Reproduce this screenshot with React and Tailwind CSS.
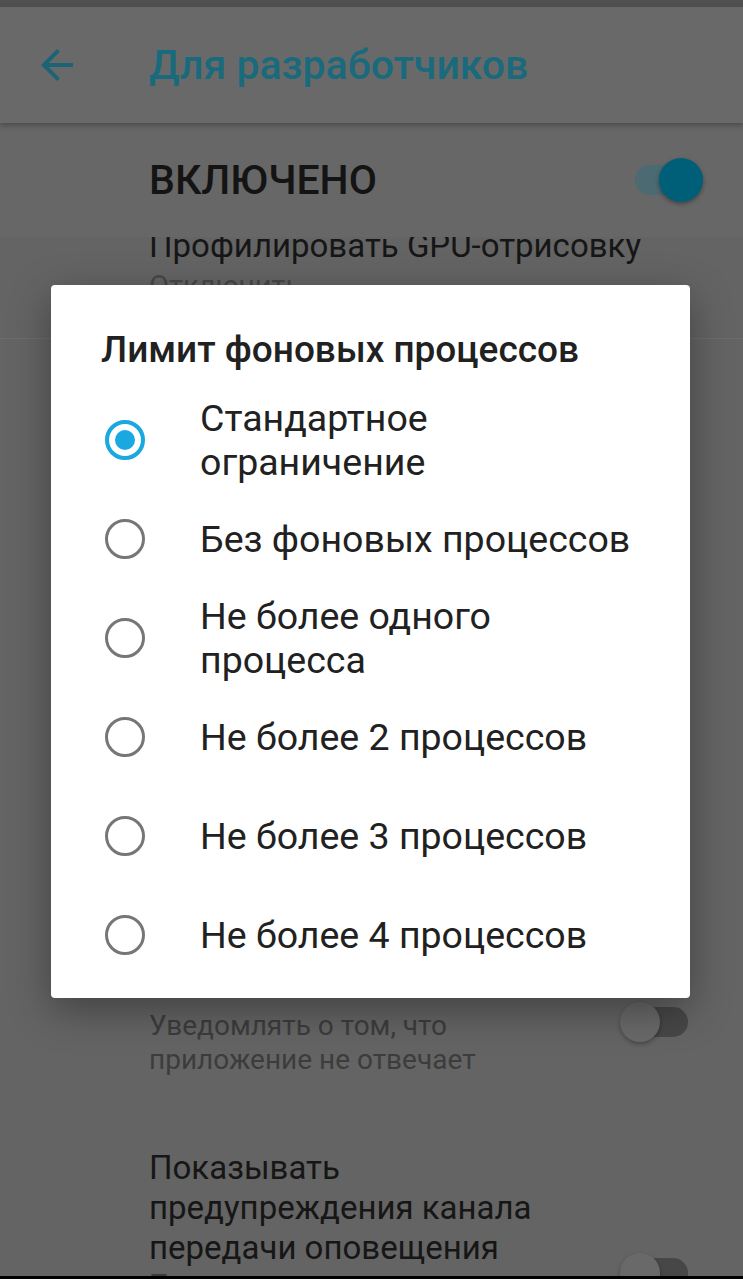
import React from "react";

const options = [
  { label: ["Стандартное", "ограничение"], checked: true },
  { label: ["Без фоновых процессов"] },
  { label: ["Не более одного", "процесса"] },
  { label: ["Не более 2 процессов"] },
  { label: ["Не более 3 процессов"] },
  { label: ["Не более 4 процессов"] },
];

function Radio({ checked }) {
  if (checked) {
    return (
      <div className="flex h-[40px] w-[40px] shrink-0 items-center justify-center rounded-full border-[4px] border-[#19a8df]">
        <div className="h-[20px] w-[20px] rounded-full bg-[#19a8df]" />
      </div>
    );
  }
  return <div className="h-[40px] w-[40px] shrink-0 rounded-full border-[3.5px] border-[#767676]" />;
}

function Toggle({ on }) {
  if (on) {
    return (
      <div className="relative h-[44px] w-[68px] shrink-0">
        <div className="absolute left-0 top-[7px] h-[30px] w-[55px] rounded-full bg-[#4b6a71]" />
        <div className="absolute right-0 top-0 h-[44px] w-[44px] rounded-full bg-[#005f78] shadow-[0_2px_4px_rgba(0,0,0,0.35)]" />
      </div>
    );
  }
  return (
    <div className="relative h-[40px] w-[68px] shrink-0">
      <div className="absolute right-0 top-[5px] h-[30px] w-[50px] rounded-full bg-[#474747]" />
      <div className="absolute left-0 top-0 h-[40px] w-[40px] rounded-full bg-[#696969] shadow-[0_2px_4px_rgba(0,0,0,0.3)]" />
    </div>
  );
}

export default function App() {
  return (
    <div className="relative h-[1279px] w-[743px] overflow-hidden border-b-[3px] border-black bg-[#646464] font-['Roboto',sans-serif]">
      {/* status bar */}
      <div className="h-[7px] bg-[#505050]" />

      {/* toolbar */}
      <header className="relative z-20 flex h-[116px] items-center bg-[#696969] shadow-[0_3px_5px_rgba(0,0,0,0.25)]">
        <svg viewBox="0 0 24 24" className="ml-[33px] h-[48px] w-[48px] fill-[#1b6476]">
          <path d="M20 11H7.83l5.59-5.59L12 4l-8 8 8 8 1.41-1.41L7.83 13H20v-2z" />
        </svg>
        <h1 className="ml-[68px] text-[41px] font-medium leading-none text-[#196a7c]">
          Для разработчиков
        </h1>
      </header>

      {/* master switch */}
      <div className="relative z-10 flex h-[114px] items-center justify-between bg-[#676767] pl-[149px] pr-[40px]">
        <span className="text-[41px] font-medium leading-none text-[#141414]">ВКЛЮЧЕНО</span>
        <Toggle on />
      </div>

      {/* list */}
      <div className="h-[101px] overflow-hidden pl-[149px]">
        <div className="-mt-[11px] text-[33px] leading-[40px] text-[#161616]">Профилировать GPU-отрисовку</div>
        <div className="mt-[2px] text-[29px] leading-[36px] text-[#474747]">Отключить</div>
      </div>
      <div className="h-px bg-[#6d6d6d]" />

      <div className="h-[619px]" />

      <div className="flex items-start">
        <div className="flex-1 pl-[149px]">
          <div className="text-[33px] leading-[40px] text-[#161616]">Показывать все ANR</div>
          <div className="mt-[11px] text-[28px] leading-[34px] text-[#3c3c3c]">
            Уведомлять о том, что
            <br />
            приложение не отвечает
          </div>
        </div>
        <div className="mr-[55px] mt-[44px]">
          <Toggle />
        </div>
      </div>

      <div className="mt-[71px] flex items-start">
        <div className="flex-1 pl-[149px]">
          <div className="text-[33px] leading-[40px] text-[#161616]">
            Показывать
            <br />
            предупреждения канала
            <br />
            передачи оповещения
          </div>
          <div className="text-[28px] leading-[34px] text-[#3c3c3c]">Показывать предупреждение</div>
        </div>
        <div className="mr-[55px] mt-[105px]">
          <Toggle />
        </div>
      </div>

      {/* dialog */}
      <div className="absolute left-[51px] top-[285px] z-30 h-[713px] w-[639px] rounded-[4px] bg-white pt-[45px] shadow-[0_12px_40px_rgba(0,0,0,0.35)]">
        <h2 className="pl-[50px] text-[37px] font-medium leading-[40px] text-[#212121]">Лимит фоновых процессов</h2>
        <div className="mt-[20px]">
          {options.map((o, i) => (
            <div key={i} className="flex h-[99px] items-center pl-[54px]">
              <Radio checked={o.checked} />
              <div className="ml-[55px] text-[37.5px] leading-[44px] text-[#212121]">
                {o.label.map((l, j) => (
                  <div key={j} className="whitespace-nowrap">
                    {l}
                  </div>
                ))}
              </div>
            </div>
          ))}
        </div>
      </div>
    </div>
  );
}
